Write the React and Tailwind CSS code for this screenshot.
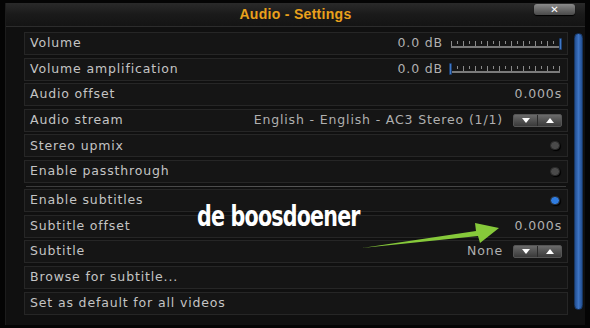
import React from 'react'

const font = { fontFamily: '"DejaVu Sans", "Liberation Sans", sans-serif' }

function Slider({ pos }) {
  const ticks = Array.from({ length: 19 })
  return (
    <div className="relative w-[113px] h-[12px] ml-[6px]">
      <div className="absolute left-[2px] right-[2px] bottom-[2px] h-[2px] bg-[#7a7a7a]" />
      <div className="absolute left-[2px] right-[2px] bottom-[4px] flex justify-between">
        {ticks.map((_, i) => (
          <div key={i} className={`w-[1px] bg-[#8a8a8a] ${i % 2 ? 'h-[3px]' : 'h-[5px]'}`} />
        ))}
      </div>
      <div
        className={`absolute top-0 w-[3px] h-[12px] rounded-[1px] bg-[#3f78c8] border border-[#1d3f70] ${
          pos === 'right' ? 'right-0' : 'left-0'
        }`}
      />
    </div>
  )
}

function Spin() {
  return (
    <div className="ml-[10px] flex h-[13px] w-[49px] rounded-[2px] border border-[#555] bg-gradient-to-b from-[#6a6a6a] to-[#3a3a3a]">
      <div className="flex flex-1 items-center justify-center border-r border-[#2a2a2a]">
        <div className="w-0 h-0 border-l-[4px] border-r-[4px] border-t-[5px] border-l-transparent border-r-transparent border-t-white" />
      </div>
      <div className="flex flex-1 items-center justify-center">
        <div className="w-0 h-0 border-l-[4px] border-r-[4px] border-b-[5px] border-l-transparent border-r-transparent border-b-white" />
      </div>
    </div>
  )
}

function Dot({ on }) {
  return (
    <div
      className={`mr-[2px] w-[10px] h-[9px] rounded-full border border-[#2a2a2a] shadow-[1px_1px_1px_#000] ${
        on ? 'bg-[#2f7ce0]' : 'bg-[#4a4a4a]'
      }`}
    />
  )
}

function Row({ label, children }) {
  return (
    <div className="flex h-[23px] shrink-0 items-center justify-between border border-[#262626] bg-[#151515] pl-[5px] pr-[5px] text-[12.5px] tracking-[0.85px]">
      <span className="text-[#c4c4c4]">{label}</span>
      <div className="flex items-center text-[#b0b0b0]">{children}</div>
    </div>
  )
}

export default function App() {
  return (
    <div className="relative w-[590px] h-[328px] overflow-hidden bg-[#040404]" style={font}>
      <div className="absolute left-[5px] top-[3px] w-[580px] h-[322px] flex flex-col bg-[#101010] border-l border-[#1c1c1c]">
        {/* title bar */}
        <div className="relative flex h-[24px] shrink-0 items-center justify-center border-b border-[#2c2c2c] bg-gradient-to-b from-[#2a2a2a] via-[#1a1a1a] to-[#141414]">
          <span className="text-[14px] font-bold text-[#e9a11c] tracking-[0.3px]" style={{ fontFamily: '"Liberation Sans", sans-serif' }}>
            Audio - Settings
          </span>
          <div className="absolute left-[528px] top-[1px] flex h-[11px] w-[41px] items-center justify-center rounded-[3px] bg-gradient-to-b from-[#8a8a8a] to-[#4a4a4a] shadow-[0_1px_1px_#000]">
            <span className="text-[10px] leading-none font-bold text-white">✕</span>
          </div>
        </div>

        <div className="flex flex-1 pt-[5px] pl-[18px] h-[283px] overflow-hidden">
          <div className="flex w-[544px] flex-col gap-[2.6px]">
            <Row label="Volume">
              <span>0.0 dB</span>
              <Slider pos="right" />
            </Row>
            <Row label="Volume amplification">
              <span>0.0 dB</span>
              <Slider pos="left" />
            </Row>
            <Row label="Audio offset">
              <span>0.000s</span>
            </Row>
            <Row label="Audio stream">
              <span>English - English - AC3 Stereo (1/1)</span>
              <Spin />
            </Row>
            <Row label="Stereo upmix">
              <Dot />
            </Row>
            <Row label="Enable passthrough">
              <Dot />
            </Row>
            <div className="h-[1px] shrink-0 bg-gradient-to-r from-[#3a3a3a] via-[#555] to-[#3a3a3a] mx-[2px]" />
            <Row label="Enable subtitles">
              <Dot on />
            </Row>
            <Row label="Subtitle offset">
              <span>0.000s</span>
            </Row>
            <Row label="Subtitle">
              <span>None</span>
              <Spin />
            </Row>
            <Row label="Browse for subtitle..." />
            <Row label="Set as default for all videos" />
          </div>
          <div className="ml-[6px] mt-[1px] h-[277px] w-[9px] rounded-full border border-[#173661] bg-gradient-to-r from-[#234f92] via-[#3d74c4] to-[#234f92]" />
        </div>
      </div>

      {/* annotation */}
      <span
        className="absolute left-[197px] top-[202px] text-[29px] font-bold leading-none tracking-[-1px] text-white"
        style={{ fontFamily: '"DejaVu Sans Condensed", "DejaVu Sans", sans-serif', transform: 'scaleX(0.79)', transformOrigin: 'left' }}
      >
        de boosdoener
      </span>
      <svg className="absolute left-0 top-0" width="590" height="328" viewBox="0 0 590 328">
        <polygon points="362,248 476,231 475,223 499,228 480,243 478,236" fill="#86c93a" />
      </svg>
    </div>
  )
}
